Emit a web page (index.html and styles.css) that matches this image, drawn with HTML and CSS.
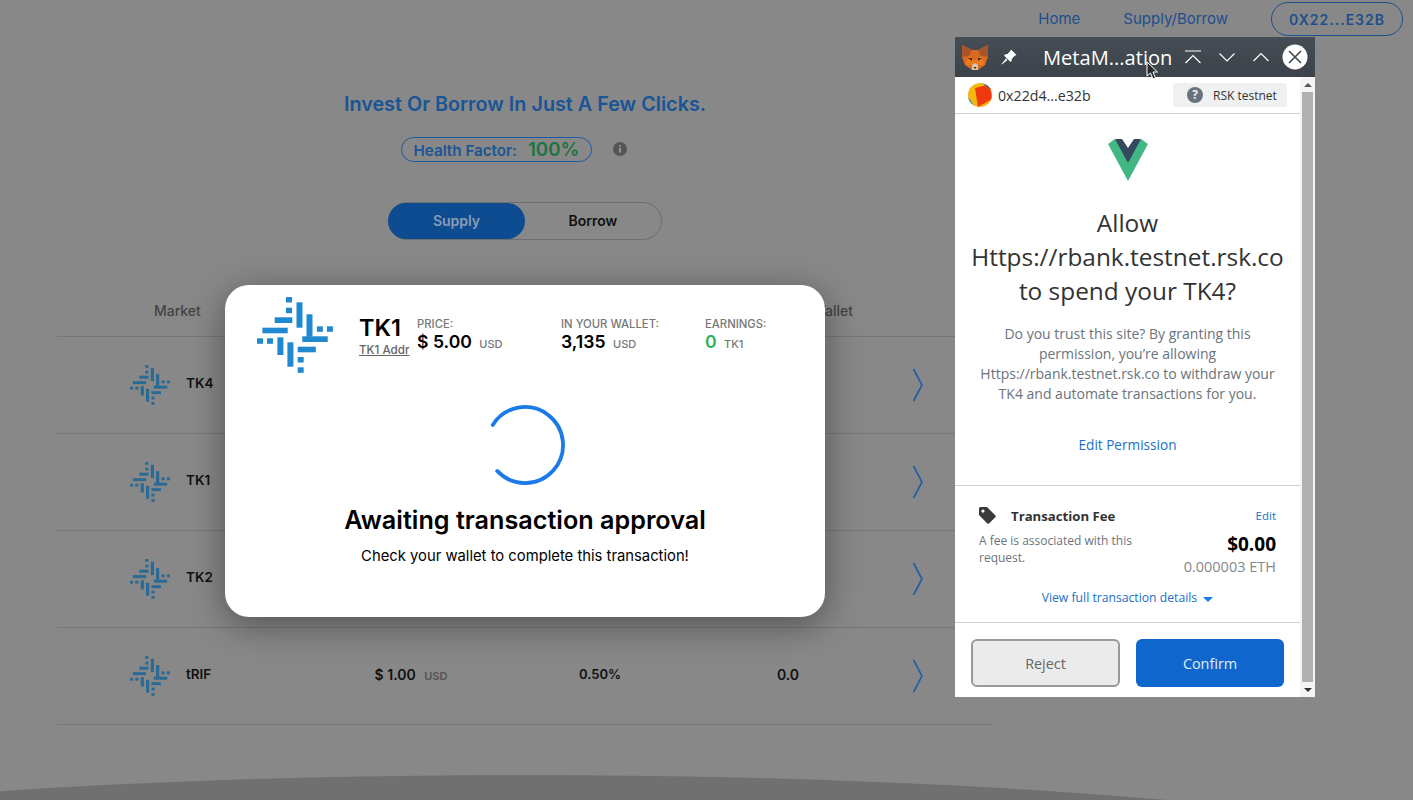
FILE: index.html
```html
<!DOCTYPE html>
<html lang="en">
<head>
  <meta charset="UTF-8" />
  <title>rBank</title>
  <link rel="stylesheet" href="styles.css">
</head>
<body>
  <svg class="defs" width="0" height="0">
    <symbol id="token" viewBox="0 0 76 76">
      <rect x="29" y="0" width="6" height="5.5"/>
      <rect x="29" y="10.7" width="6" height="5.5"/>
      <rect x="39.5" y="5.3" width="6" height="25.4"/>
      <rect x="49.5" y="17.3" width="6" height="22.4"/>
      <rect x="59.9" y="29.3" width="6" height="5.5"/>
      <rect x="69.9" y="29.3" width="6" height="5.5"/>
      <rect x="17.7" y="20.3" width="17.6" height="5.7"/>
      <rect x="5.4" y="30.7" width="25.3" height="5.6"/>
      <rect x="45.3" y="39.3" width="25.4" height="5.7"/>
      <rect x="40.7" y="49.7" width="18.1" height="5.6"/>
      <rect x="0" y="41.3" width="6" height="5.5"/>
      <rect x="10" y="41.3" width="6" height="5.5"/>
      <rect x="20.4" y="40.3" width="6" height="17.7"/>
      <rect x="30.4" y="45.3" width="6" height="24.4"/>
      <rect x="40.7" y="60" width="6" height="5.5"/>
      <rect x="40.7" y="70.3" width="6" height="5.5"/>
    </symbol>
    <symbol id="chevron" viewBox="0 0 12 34">
      <path d="M1.5 1 L10 17 L1.5 33" fill="none" stroke="#1c5fa8" stroke-width="1.6"/>
    </symbol>
  </svg>

  <nav class="nav">
    <a class="nav-link">Home</a>
    <a class="nav-link">Supply/Borrow</a>
    <button class="wallet-btn">0X22...E32B</button>
  </nav>

  <main class="main">
    <h1 class="headline">Invest Or Borrow In Just A Few Clicks.</h1>
    <div class="health-row">
      <div class="health-pill">
        <span class="health-label">Health Factor:</span>
        <span class="health-value">100%</span>
      </div>
      <svg class="info-icon" width="14" height="14" viewBox="0 0 14 14">
        <circle cx="7" cy="7" r="7" fill="#555"/>
        <rect x="6.1" y="6" width="1.8" height="4.6" fill="#999"/>
        <rect x="6.1" y="3.4" width="1.8" height="1.7" fill="#999"/>
      </svg>
    </div>
    <div class="toggle">
      <div class="toggle-on">Supply</div>
      <div class="toggle-off">Borrow</div>
    </div>
  </main>

  <section class="market">
    <div class="market-head">
      <div class="head-market">Market</div>
      <div class="head-wallet">In Wallet</div>
    </div>
    <div class="market-row">
      <div class="token"><svg class="token-icon"><use href="#token"/></svg><span class="token-name">TK4</span></div>
      <div></div><div></div><div></div>
      <svg class="chevron"><use href="#chevron"/></svg>
    </div>
    <div class="market-row">
      <div class="token"><svg class="token-icon"><use href="#token"/></svg><span class="token-name">TK1</span></div>
      <div></div><div></div><div></div>
      <svg class="chevron"><use href="#chevron"/></svg>
    </div>
    <div class="market-row">
      <div class="token"><svg class="token-icon"><use href="#token"/></svg><span class="token-name">TK2</span></div>
      <div></div><div></div><div></div>
      <svg class="chevron"><use href="#chevron"/></svg>
    </div>
    <div class="market-row">
      <div class="token"><svg class="token-icon"><use href="#token"/></svg><span class="token-name">tRIF</span></div>
      <div class="cell">$ 1.00 <span class="cell-unit">USD</span></div>
      <div class="cell cell-rate">0.50%</div>
      <div class="cell">0.0</div>
      <svg class="chevron"><use href="#chevron"/></svg>
    </div>
  </section>

  <footer class="wave-wrap"><div class="wave"></div></footer>

  <!-- transaction modal -->
  <div class="modal">
    <div class="modal-top">
      <svg class="modal-logo"><use href="#token"/></svg>
      <div class="modal-name">
        <div class="modal-symbol">TK1</div>
        <a class="modal-addr">TK1 Addr</a>
      </div>
      <div class="stat stat-price">
        <div class="stat-label">PRICE:</div>
        <div class="stat-value">$ 5.00 <span class="stat-unit">USD</span></div>
      </div>
      <div class="stat stat-wallet">
        <div class="stat-label">IN YOUR WALLET:</div>
        <div class="stat-value">3,135 <span class="stat-unit">USD</span></div>
      </div>
      <div class="stat">
        <div class="stat-label">EARNINGS:</div>
        <div class="stat-value"><span class="green">0</span> <span class="stat-unit">TK1</span></div>
      </div>
    </div>
    <svg class="spinner" width="80" height="80" viewBox="0 0 80 80">
      <path d="M7.8 19.9 A38 38 0 1 1 12.2 65.9" fill="none" stroke="#1a7ae8" stroke-width="3.8" stroke-linecap="round"/>
    </svg>
    <h2 class="modal-title">Awaiting transaction approval</h2>
    <p class="modal-text">Check your wallet to complete this transaction!</p>
  </div>

  <!-- metamask popup -->
  <div class="popup">
    <div class="titlebar">
      <svg class="fox" width="28" height="28" viewBox="0 0 28 28">
        <polygon points="1,2 11,7 17,7 27,2 27,14 24,22 17,27 11,27 4,22 1,14" fill="#d9691f"/>
        <polygon points="1,2 11,7 8,13 1,14" fill="#a9552a"/>
        <polygon points="27,2 17,7 20,13 27,14" fill="#a9552a"/>
        <polygon points="8,13 14,18 20,13 24,22 17,22 14,20 11,22 4,22" fill="#ee7a1e"/>
        <polygon points="7,15 11,15 11,18" fill="#3a2a20"/>
        <polygon points="21,15 17,15 17,18" fill="#3a2a20"/>
        <polygon points="11,22 14,20 17,22 17,27 11,27" fill="#d8c4b0"/>
        <polygon points="12.5,24 15.5,24 14,26" fill="#33261c"/>
      </svg>
      <svg class="pin" width="18" height="18" viewBox="0 0 18 18">
        <path d="M11 1.5 L16.5 7 L14.8 7.8 L12 10.5 L11.6 13 L10.5 14 L4 7.5 L5 6.4 L7.5 6 L10.2 3.2 Z M6 10.6 L7.4 12 L2 16.5 L1.5 16 Z" fill="#fff"/>
      </svg>
      <div class="title">MetaM...ation</div>
      <svg class="bar-icon" width="18" height="18" viewBox="0 0 18 18">
        <path d="M1 3 H17 M1.5 15 L9 7.5 L16.5 15" fill="none" stroke="#fff" stroke-width="1.2"/>
      </svg>
      <svg class="bar-icon" width="18" height="18" viewBox="0 0 18 18">
        <path d="M1.5 5.5 L9 13 L16.5 5.5" fill="none" stroke="#fff" stroke-width="1.2"/>
      </svg>
      <svg class="bar-icon" width="18" height="18" viewBox="0 0 18 18">
        <path d="M1.5 13 L9 5.5 L16.5 13" fill="none" stroke="#fff" stroke-width="1.2"/>
      </svg>
      <svg class="close" width="26" height="26" viewBox="0 0 26 26">
        <circle cx="13" cy="13" r="12.5" fill="#fff"/>
        <path d="M7 7 L19 19 M19 7 L7 19" stroke="#3f464e" stroke-width="1.6"/>
      </svg>
    </div>
    <div class="popup-body">
      <div class="popup-content">
        <div class="account-bar">
          <svg class="identicon" width="24" height="24" viewBox="0 0 24 24">
            <defs><clipPath id="ident"><circle cx="12" cy="12" r="12"/></clipPath></defs>
            <g clip-path="url(#ident)">
              <rect width="24" height="24" fill="#f5b80f"/>
              <polygon points="7,5 22,1 24,16 10,24" fill="#f03a0e"/>
              <polygon points="14,0 24,0 24,7" fill="#1578b8"/>
              <polygon points="0,14 7,24 0,24" fill="#1a8fb0"/>
            </g>
          </svg>
          <span class="account-addr">0x22d4...e32b</span>
          <div class="network">
            <svg width="16" height="16" viewBox="0 0 16 16">
              <circle cx="8" cy="8" r="8" fill="#6a737d"/>
              <text class="network-q" x="8" y="12" text-anchor="middle">?</text>
            </svg>
            RSK testnet
          </div>
        </div>
        <div class="permission">
          <svg class="vue" width="40" height="42" viewBox="0 0 40 42">
            <polygon points="0,5 7,0 20,18 33,0 40,5 20,42" fill="#41b883"/>
            <polygon points="7,0 14,0 20,9 26,0 33,0 20,24" fill="#35495e"/>
          </svg>
          <h2 class="allow">Allow<br>Https://rbank.testnet.rsk.co<br>to spend your TK4?</h2>
          <p class="allow-text">Do you trust this site? By granting this permission, you’re allowing Https://rbank.testnet.rsk.co to withdraw your TK4 and automate transactions for you.</p>
          <a class="edit-perm">Edit Permission</a>
        </div>
        <div class="fee">
          <div class="fee-top">
            <svg class="tag" width="17" height="17" viewBox="0 0 17 17">
              <path d="M0 1.5 Q0 0 1.5 0 H8 L16.5 8.5 Q17 9.5 16.5 10 L10 16.5 Q9 17 8 16.2 L0 8 Z M4 2.5 A1.6 1.6 0 1 0 4 5.7 A1.6 1.6 0 1 0 4 2.5 Z" fill="#3a3a3a" fill-rule="evenodd"/>
            </svg>
            <span class="fee-title">Transaction Fee</span>
            <a class="fee-edit">Edit</a>
          </div>
          <div class="fee-mid">
            <div class="fee-note">A fee is associated with this request.</div>
            <div class="fee-amounts">
              <div class="fee-usd">$0.00</div>
              <div class="fee-eth">0.000003 ETH</div>
            </div>
          </div>
          <a class="fee-details">View full transaction details <span class="caret"></span></a>
        </div>
        <div class="actions">
          <button class="btn-reject">Reject</button>
          <button class="btn-confirm">Confirm</button>
        </div>
      </div>
      <div class="scrollbar">
        <span class="arrow-up"></span>
        <div class="thumb"></div>
        <span class="arrow-down"></span>
      </div>
    </div>
  </div>

  <svg class="cursor" width="14" height="20" viewBox="0 0 14 20">
    <path d="M1 1 V15 L4.5 12 L7 18 L9.5 17 L7 11 H11.5 Z" fill="#2b2b2b" stroke="#fff" stroke-width="1"/>
  </svg>
</body>
</html>
```

FILE: styles.css
```css
body {
  margin: 0;
  height: 800px;
  overflow: hidden;
  position: relative;
  background-color: #888;
  font-family: Inter, Roboto, sans-serif;
  color: #111;
}
.defs {
  position: absolute;
}

/* nav */
.nav {
  display: flex;
  justify-content: flex-end;
  align-items: center;
  height: 34px;
  padding: 2px 10px 0 0;
}
.nav-link {
  margin: -2px 43px 0 0;
  color: #1c4f8c;
  font-size: 15px;
}
.wallet-btn {
  width: 132px;
  height: 34px;
  border: 1px solid #1c4f8c;
  border-radius: 17px;
  background: none;
  color: #1c4f8c;
  font-family: Inter, sans-serif;
  font-size: 14px;
  font-weight: 600;
  letter-spacing: 1px;
}

/* hero */
.main {
  width: 1050px;
  display: flex;
  flex-direction: column;
  align-items: center;
}
.headline {
  margin: 55px 0 0;
  font-size: 19.8px;
  line-height: 26px;
  font-weight: 600;
  color: #185596;
}
.health-row {
  display: flex;
  align-items: center;
  margin: 20px 0 0 -23px;
}
.health-pill {
  display: flex;
  align-items: center;
  box-sizing: border-box;
  width: 191px;
  height: 25px;
  padding: 2px 12px 0;
  border: 1px solid #1c5a9e;
  border-radius: 13px;
}
.health-label {
  font-size: 15.2px;
  font-weight: 600;
  color: #1a5596;
  white-space: nowrap;
}
.health-value {
  margin-left: 11px;
  margin-top: -3px;
  font-size: 18.7px;
  font-weight: 600;
  color: #1f7341;
}
.info-icon {
  margin: -2px 0 0 21px;
}
.toggle {
  display: flex;
  box-sizing: border-box;
  width: 274px;
  height: 38px;
  margin-top: 40px;
  border: 1px solid #6e6e6e;
  border-radius: 19px;
  font-size: 14px;
  font-weight: 600;
  line-height: 36px;
  text-align: center;
}
.toggle-on {
  width: 137px;
  margin: 0 0 0 -1px;
  background-color: #0d4c90;
  border-radius: 19px;
  color: #8a9bb3;
}
.toggle-off {
  flex: 1;
}

/* market table */
.market {
  width: 935px;
  margin: 55px 0 0 57px;
}
.market-head {
  position: relative;
  display: flex;
  justify-content: space-between;
  height: 41px;
  border-bottom: 1px solid #777;
  font-size: 14px;
  font-weight: 500;
  line-height: 32px;
  color: #444;
}
.head-market {
  margin-left: 97px;
}
.head-wallet {
  margin-right: 139px;
}
.market-row {
  display: grid;
  grid-template-columns: 260px 188px 190px 186px 74px;
  align-items: center;
  height: 96px;
  border-bottom: 1px solid #777;
}
.token {
  display: flex;
  align-items: center;
  padding-left: 73px;
  font-size: 13.5px;
  font-weight: 600;
  color: #111;
}
.token-name {
  margin-top: -4px;
}
.token-icon {
  width: 40px;
  height: 40px;
  margin-right: 16px;
  fill: #2a6a94;
}
.cell {
  padding-bottom: 4px;
  font-size: 14px;
  font-weight: 600;
  text-align: center;
  color: #111;
}
.cell-rate {
  font-size: 13px;
}
.cell-unit {
  margin-left: 5px;
  font-size: 11px;
  color: #555;
}
.chevron {
  width: 12px;
  height: 34px;
  justify-self: center;
}
.wave-wrap {
  height: 25px;
  margin-top: 50px;
  overflow: hidden;
}
.wave {
  width: 2200px;
  height: 266px;
  margin-left: -575px;
  border-radius: 50%;
  background-color: #707070;
}

/* modal */
.modal {
  position: absolute;
  left: 225px;
  top: 285px;
  box-sizing: border-box;
  width: 600px;
  height: 332px;
  padding-top: 12px;
  background-color: #fff;
  border-radius: 24px;
  box-shadow: 0 8px 36px rgba(0,0,0,0.4);
  text-align: center;
}
.modal-top {
  display: flex;
  padding-left: 32px;
  text-align: left;
}
.modal-logo {
  width: 76px;
  height: 76px;
  fill: #2088cf;
}
.modal-name {
  width: 58px;
  margin: 18px 0 0 26px;
}
.modal-symbol {
  font-size: 23.5px;
  font-weight: 600;
  line-height: 26px;
  color: #000;
}
.modal-addr {
  display: block;
  margin-top: 3px;
  font-size: 11.6px;
  font-weight: 500;
  line-height: 13px;
  color: #666;
  text-decoration: underline;
  white-space: nowrap;
}
.stat {
  margin-top: 21px;
}
.stat-price,
.stat-wallet {
  width: 144px;
}
.stat-label {
  font-size: 11.3px;
  font-weight: 500;
  line-height: 12px;
  color: #777;
}
.stat-value {
  margin-top: 1px;
  font-size: 17.6px;
  font-weight: 600;
  line-height: 22px;
  color: #000;
}
.stat-unit {
  margin-left: 3px;
  font-size: 11px;
  font-weight: 500;
  color: #777;
}
.green {
  color: #2bb35f;
}
.spinner {
  display: block;
  margin: 32px auto 0;
}
.modal-title {
  margin: 20px 0 0;
  font-size: 25.2px;
  font-weight: 600;
  line-height: 30px;
  color: #000;
}
.modal-text {
  margin: 11px 0 0;
  font-size: 14.8px;
  line-height: 20px;
  color: #000;
}

/* metamask popup */
.popup {
  position: absolute;
  left: 955px;
  top: 37px;
  width: 360px;
  height: 660px;
  display: flex;
  flex-direction: column;
  background-color: #fff;
  font-family: "Open Sans", sans-serif;
}
.titlebar {
  display: flex;
  align-items: center;
  height: 40px;
  flex: none;
  background: linear-gradient(#464d56, #3b4249);
}
.fox {
  margin-left: 6px;
}
.pin {
  margin-left: 11px;
}
.title {
  width: 126px;
  margin-left: 25px;
  font-size: 20.1px;
  color: #fff;
  white-space: nowrap;
}
.bar-icon {
  margin-left: 16px;
}
.title + .bar-icon {
  margin-left: 15px;
}
.close {
  margin-left: 12px;
}
.popup-body {
  flex: 1;
  display: flex;
  min-height: 0;
}
.popup-content {
  flex: none;
  width: 345px;
  display: flex;
  flex-direction: column;
}
.account-bar {
  display: flex;
  align-items: center;
  box-sizing: border-box;
  height: 37px;
  padding: 0 13px;
  border-bottom: 1px solid #d0d0d0;
}
.account-addr {
  margin-left: 6px;
  font-size: 14.2px;
  color: #333;
}
.network {
  display: flex;
  align-items: center;
  gap: 10px;
  box-sizing: border-box;
  width: 114px;
  height: 24px;
  margin-left: auto;
  padding-left: 14px;
  background-color: #eff0f2;
  border-radius: 3px;
  font-size: 12px;
  color: #333;
  white-space: nowrap;
}
.network-q {
  font-size: 12px;
  font-weight: 700;
  fill: #eff0f2;
}
.permission {
  display: flex;
  flex-direction: column;
  align-items: center;
  height: 372px;
  box-sizing: border-box;
  border-bottom: 1px solid #d0d0d0;
  padding-top: 25px;
  text-align: center;
}
.allow {
  margin: 25px 0 0;
  font-size: 24.4px;
  font-weight: 400;
  line-height: 34px;
  color: #333;
  white-space: nowrap;
}
.allow-text {
  margin: 16px 0 0;
  width: 300px;
  font-size: 14px;
  line-height: 20px;
  color: #6a737d;
}
.edit-perm {
  margin-top: 31px;
  font-size: 13.6px;
  color: #1a6fc8;
}
.fee {
  height: 137px;
  box-sizing: border-box;
  padding: 21px 24px 0;
  border-bottom: 1px solid #d0d0d0;
}
.fee-top {
  display: flex;
  align-items: center;
  height: 17px;
}
.fee-title {
  margin-left: 15px;
  font-size: 13.2px;
  font-weight: 700;
  color: #333;
}
.fee-edit {
  margin-left: auto;
  font-size: 11.5px;
  color: #1a6fc8;
}
.fee-mid {
  display: flex;
  justify-content: space-between;
  margin-top: 8px;
}
.fee-note {
  width: 170px;
  font-size: 12px;
  line-height: 17px;
  color: #6a737d;
}
.fee-amounts {
  text-align: right;
}
.fee-usd {
  font-size: 19px;
  font-weight: 700;
  line-height: 24px;
  color: #000;
}
.fee-eth {
  font-size: 14.5px;
  line-height: 20px;
  margin-top: 1px;
  color: #888;
}
.fee-details {
  display: block;
  margin-top: 12px;
  font-size: 12.2px;
  color: #1a6fc8;
  text-align: center;
}
.caret {
  display: inline-block;
  margin-left: 3px;
  border-left: 5px solid transparent;
  border-right: 5px solid transparent;
  border-top: 5px solid #1a7ae8;
  vertical-align: 0;
}
.actions {
  display: flex;
  gap: 16px;
  padding: 16px 16px 0;
}
.actions button {
  flex: none;
  box-sizing: border-box;
  height: 48px;
  border-radius: 6px;
  font-family: "Open Sans", sans-serif;
  font-size: 14.4px;
}
.btn-reject {
  width: 149px;
  background-color: #ebebeb;
  border: 2px solid #999;
  color: #666;
}
.btn-confirm {
  width: 148px;
  background-color: #0f66cc;
  border: none;
  color: #e4eefa;
}
.scrollbar {
  flex: 1;
  display: flex;
  flex-direction: column;
  align-items: center;
  background-color: #f4f4f4;
}
.arrow-up,
.arrow-down {
  flex: none;
  width: 0;
  height: 0;
  margin: 6px 0 5px;
  border-left: 4px solid transparent;
  border-right: 4px solid transparent;
}
.arrow-up {
  border-bottom: 4px solid #555;
}
.arrow-down {
  border-top: 4px solid #333;
}
.thumb {
  flex: 1;
  width: 11px;
  background-color: #b0b0b0;
}

.cursor {
  position: absolute;
  left: 1146px;
  top: 61px;
}
```
